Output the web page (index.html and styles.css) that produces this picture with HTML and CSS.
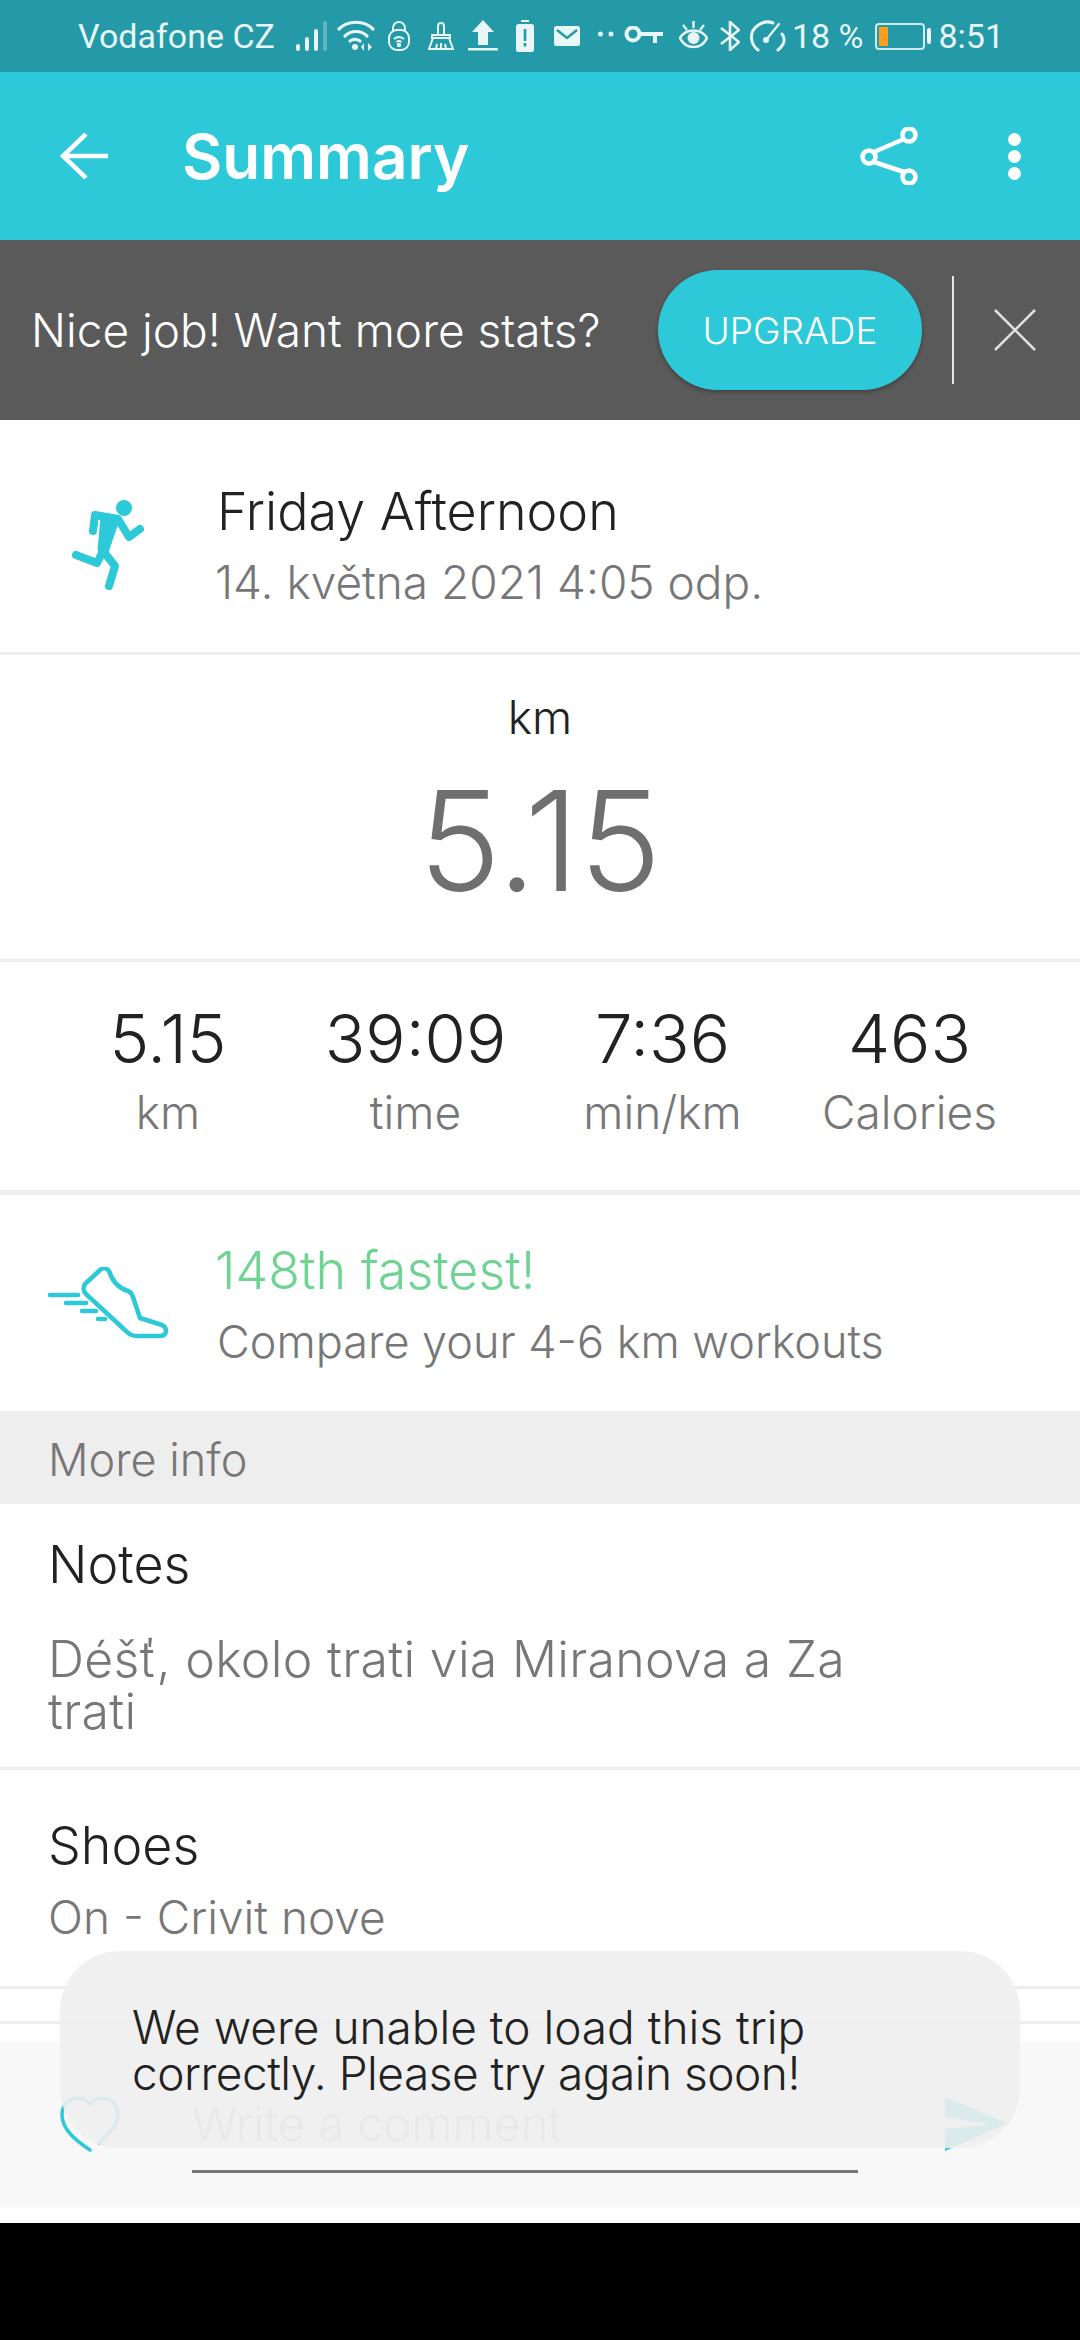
FILE: index.html
```html
<!DOCTYPE html>
<html lang="en">
<head>
    <meta charset="UTF-8">
    <title>Summary</title>
    <link rel="stylesheet" href="styles.css">
</head>
<body>
<div class="phone">
    <div class="status">
        <span class="carrier">Vodafone CZ</span>
        <div class="status-right">
            <svg class="i-signal" width="32" height="32" viewBox="0 0 32 32" fill="#e8f6f8">
                <rect x="0" y="24" width="4" height="7" rx="2"/><rect x="9" y="17" width="4" height="14" rx="2"/><rect x="18" y="9" width="4" height="22" rx="2"/><rect x="27" y="1" width="4" height="30" rx="2" opacity=".3"/>
            </svg>
            <svg class="i-wifi" width="38" height="32" viewBox="0 0 38 32" fill="none" stroke="#e8f6f8" stroke-width="3.2" stroke-linecap="round">
                <path d="M2 9C11 0 27 0 36 9"/><path d="M8 16C14 10 24 10 30 16"/><circle cx="18" cy="27" r="3" fill="#e8f6f8" stroke="none"/>
                <path d="M13 21C16 19 20 19 23 21"/><path d="M27 23l-3 4 3 4zM31 23l4 4-4 4z" fill="#e8f6f8" stroke="none"/>
            </svg>
            <svg class="i-lock" width="22" height="30" viewBox="0 0 22 30" fill="none" stroke="#e8f6f8" stroke-width="2">
                <rect x="1" y="9" width="20" height="20" rx="8"/><path d="M5 10V7a6 6 0 0 1 12 0v3"/><path d="M6 18c3-2.500 7-2.500 10 0M8.500 21c2-1.500 3-1.500 5 0"/><circle cx="11" cy="24" r="1.200" fill="#e8f6f8"/>
            </svg>
            <svg class="i-brush" width="26" height="28" viewBox="0 0 26 28" fill="none" stroke="#e8f6f8" stroke-width="2">
                <path d="M10 12V4a3 3 0 0 1 6 0v8"/><path d="M4 13h18v3H4zM5 16L1 27h24l-4-11M9 22l-1 5M17 22l1 5M13 21v6"/>
            </svg>
            <svg class="i-upload" width="30" height="32" viewBox="0 0 30 32" fill="#e8f6f8">
                <path d="M15 0L26 12H20V25H10V12H4z"/><rect x="0" y="28" width="30" height="2.500"/>
            </svg>
            <svg class="i-alert" width="18" height="32" viewBox="0 0 18 32">
                <rect x="5" y="0" width="8" height="2" fill="#e8f6f8"/><rect x="0" y="4" width="18" height="28" rx="2.500" fill="#e8f6f8"/><rect x="7.700" y="9" width="2.600" height="12" fill="#2499a7"/><rect x="7.700" y="23" width="2.600" height="3.500" fill="#2499a7"/>
            </svg>
            <svg class="i-mail" width="26" height="20" viewBox="0 0 26 20">
                <rect x="0" y="0" width="26" height="20" rx="2.500" fill="#e8f6f8"/><path d="M3 4l10 8 10-8" fill="none" stroke="#2499a7" stroke-width="2.500"/>
            </svg>
            <svg class="i-key" width="65" height="20" viewBox="0 0 65 20" fill="none" stroke="#e8f6f8">
                <circle cx="2.500" cy="8" r="2.500" fill="#e8f6f8" stroke="none"/><circle cx="13" cy="8" r="2.500" fill="#e8f6f8" stroke="none"/>
                <circle cx="35" cy="8" r="6.500" stroke-width="4"/><path d="M42 8H65M57 8v9" stroke-width="4"/>
            </svg>
            <svg class="i-eye" width="29" height="32" viewBox="0 0 29 32" fill="none" stroke="#e8f6f8">
                <path d="M1 18C7 8 22 8 28 18C22 30 7 30 1 18Z" stroke-width="2.600"/><circle cx="14.500" cy="18" r="6" fill="#e8f6f8" stroke="none"/>
                <path d="M14.500 1v7M4 5l4 5M25 5l-4 5" stroke-width="2.400"/>
            </svg>
            <svg class="i-bt" width="20" height="30" viewBox="0 0 20 30" fill="none" stroke="#e8f6f8" stroke-width="2.600">
                <path d="M1 7L19 21L10 29V1L19 9L1 23"/>
            </svg>
            <svg class="i-gauge" width="38" height="32" viewBox="0 0 38 32" fill="none" stroke="#e8f6f8" stroke-width="3" stroke-linecap="round">
                <path d="M9 30C1 24 0 12 8 6C13 2 19 1 24 3"/><path d="M33 14c4 5 2 11-4 16"/><path d="M17 20L30 4" stroke-width="2.200"/><circle cx="17" cy="20" r="3" fill="#e8f6f8" stroke="none"/>
            </svg>
            <span class="pct">18 %</span>
            <div class="battery">
                <div class="battery-box"><div class="battery-fill"></div></div>
                <div class="battery-tip"></div>
            </div>
            <span class="time">8:51</span>
        </div>
    </div>

    <div class="appbar">
        <svg class="back" width="48" height="46" viewBox="0 0 48 46" fill="none" stroke="#fff" stroke-width="4.500">
            <path d="M3 23H48M26 1L3 23L26 45"/>
        </svg>
        <h1 class="title">Summary</h1>
        <svg class="share" width="58" height="58" viewBox="0 0 58 58" fill="none" stroke="#fff" stroke-width="4.500">
            <circle cx="49" cy="8" r="6.500"/><circle cx="9" cy="30" r="6.500"/><circle cx="49" cy="50" r="6.500"/><path d="M14 25L44 12M14 35L44 45"/>
        </svg>
        <div class="dots"><span></span><span></span><span></span></div>
    </div>

    <div class="banner">
        <span class="banner-text">Nice job! Want more stats?</span>
        <button class="upgrade">UPGRADE</button>
        <div class="banner-sep"></div>
        <svg class="close" width="42" height="42" viewBox="0 0 42 42" stroke="#e0e0e0" stroke-width="2.500"><path d="M1 1L41 41M41 1L1 41"/></svg>
    </div>

    <div class="trip">
        <svg class="runner" width="72" height="90" viewBox="0 0 72 90" fill="none" stroke="#2ec9d8" stroke-width="8" stroke-linecap="round" stroke-linejoin="round">
            <circle cx="52" cy="8" r="8" fill="#2ec9d8" stroke="none"/>
            <path d="M21 31L23 15L46 19L57 37L68 29"/>
            <path d="M30 17L46 20L35 52L27 50Z" fill="#2ec9d8" stroke-width="3"/>
            <path d="M31 51L43 66L37 86"/>
            <path d="M31 51L25 63L4 55"/>
        </svg>
        <div class="trip-text">
            <div class="trip-name">Friday Afternoon</div>
            <div class="trip-date">14. května 2021 4:05 odp.</div>
        </div>
    </div>

    <div class="main-stat">
        <div class="main-unit">km</div>
        <div class="main-value">5.15</div>
    </div>

    <div class="stats">
        <div class="stat"><div class="stat-value">5.15</div><div class="stat-label">km</div></div>
        <div class="stat"><div class="stat-value">39:09</div><div class="stat-label">time</div></div>
        <div class="stat"><div class="stat-value">7:36</div><div class="stat-label">min/km</div></div>
        <div class="stat"><div class="stat-value">463</div><div class="stat-label">Calories</div></div>
    </div>

    <div class="compare">
        <svg class="shoe" width="120" height="72" viewBox="0 0 120 72" fill="none" stroke="#2ec9d8" stroke-width="4.500" stroke-linecap="round" stroke-linejoin="round">
            <path d="M37 17L52 3C55 0 59 1 61 4C64 13 69 21 80 24C83 25 84 27 85 30L92 51L114 58C120 61 119 69 112 69H89C85 69 82 68 79 65L38 27C35 24 35 20 37 17Z"/>
            <path d="M2 28H30M18 36H38M34 44H48M50 52H57"/>
        </svg>
        <div class="compare-text">
            <div class="compare-rank">148th fastest!</div>
            <div class="compare-sub">Compare your 4-6 km workouts</div>
        </div>
    </div>

    <div class="section-head">More info</div>

    <div class="info notes">
        <div class="info-title">Notes</div>
        <div class="info-body">Déšť, okolo trati via Miranova a Za<br>trati</div>
    </div>
    <div class="info shoes">
        <div class="info-title">Shoes</div>
        <div class="info-body">On - Crivit nove</div>
    </div>
    <div class="empty-row"></div>

    <div class="comment-bar">
        <svg class="heart" width="60" height="56" viewBox="0 0 60 56" fill="none" stroke="#2ec9d8" stroke-width="3.500" stroke-linecap="round">
            <path d="M30 7C26 2 21 1 17 1C8 1 2 9 2 18C2 32 15 43 30 53"/>
            <path d="M30 7C34 2 39 1 43 1C52 1 58 9 58 18C58 28 48 37 39 46"/>
        </svg>
        <div class="comment-input">Write a comment</div>
        <svg class="send" width="62" height="54" viewBox="0 0 62 54" fill="#2ec9d8"><path d="M0 0L62 26L0 54V32L43 27L0 20Z"/></svg>
    </div>
    <div class="gap"></div>
    <div class="navbar"></div>

    <div class="toast"><span>We were unable to load this trip</span><br><span class="toast-second">correctly. Please try again soon!</span></div>
</div>
</body>
</html>
```

FILE: styles.css
```css
* {
    box-sizing: border-box;
}
body {
    margin: 0;
    background: #000;
    font-family: Inter, "Noto Sans", sans-serif;
    font-weight: 300;
}
.phone {
    position: relative;
    width: 1080px;
    height: 2340px;
    background: #fff;
    overflow: hidden;
    display: flex;
    flex-direction: column;
}
.status {
    height: 72px;
    flex: none;
    background: #2499a7;
    color: #e8f6f8;
    display: flex;
    align-items: center;
    padding: 0 76px 0 78px;
    font-family: Roboto, sans-serif;
    font-weight: 400;
    font-size: 34px;
}
.status-right {
    margin-left: auto;
    display: flex;
    align-items: center;
}
.i-wifi { margin-left: 9px; }
.i-lock { margin-left: 13px; }
.i-brush { margin-left: 18px; }
.i-upload { margin-left: 14px; }
.i-alert { margin-left: 18px; }
.i-mail { margin-left: 20px; }
.i-key { margin-left: 18px; }
.i-eye { margin-left: 16px; }
.i-bt { margin-left: 12px; }
.i-gauge { margin-left: 9px; }
.pct {
    margin-left: 5px;
}
.battery {
    display: flex;
    align-items: center;
    gap: 2px;
    margin-left: 12px;
    margin-right: 7px;
}
.battery-box {
    width: 50px;
    height: 27px;
    border: 2px solid #cfeaee;
    border-radius: 4px;
    padding: 2px;
}
.battery-fill {
    width: 9px;
    height: 100%;
    background: #ff9d1c;
}
.battery-tip {
    width: 4px;
    height: 16px;
    background: #e8f6f8;
    border-radius: 2px;
}
.appbar {
    height: 168px;
    flex: none;
    background: #2ec9d8;
    display: flex;
    align-items: center;
    padding: 0 59px 0 60px;
    color: #fff;
}
.back {
    margin-right: 74px;
}
.title {
    margin: 0;
    font-size: 62px;
    font-weight: 600;
    flex: 1;
}
.dots {
    display: flex;
    flex-direction: column;
    gap: 4px;
    margin-left: 90px;
}
.dots span {
    width: 13px;
    height: 13px;
    border-radius: 50%;
    background: #fff;
}
.banner {
    height: 180px;
    flex: none;
    background: #5a5a5a;
    display: flex;
    align-items: center;
    padding-left: 31px;
    color: #fff;
}
.banner-text {
    font-size: 46px;
    width: 627px;
    white-space: nowrap;
}
.upgrade {
    width: 264px;
    height: 120px;
    border: none;
    border-radius: 60px;
    background: #2ec9d8;
    color: #fff;
    font-family: inherit;
    font-weight: 300;
    font-size: 37px;
    box-shadow: 0 2px 4px rgba(0, 0, 0, 0.3);
}
.banner-sep {
    width: 2px;
    height: 108px;
    background: #e6e6e6;
    margin: 0 40px 0 30px;
}
.trip {
    height: 235px;
    flex: none;
    display: flex;
    align-items: center;
    padding-left: 72px;
    padding-top: 22px;
    border-bottom: 3px solid #eee;
}
.runner {
    margin-top: -4px;
}
.trip-text {
    margin-left: 73px;
}
.trip-name {
    font-size: 52px;
    color: #222;
    line-height: 66px;
    margin-bottom: 4px;
}
.trip-date {
    font-size: 46px;
    color: #777;
    line-height: 66px;
    margin-left: -2px;
}
.main-stat {
    height: 307px;
    flex: none;
    text-align: center;
    border-bottom: 3px solid #eee;
    padding-top: 32px;
}
.main-unit {
    font-size: 46px;
    color: #222;
    line-height: 60px;
}
.main-value {
    font-size: 139px;
    color: #6f6f6f;
    line-height: 170px;
    margin-top: 9px;
}
.stats {
    height: 233px;
    flex: none;
    display: grid;
    grid-template-columns: 248px 247px 247px 247px;
    padding-left: 44px;
    padding-bottom: 10px;
    border-bottom: 5px solid #eee;
    text-align: center;
    align-content: center;
}
.stat-value {
    font-size: 67px;
    color: #222;
    line-height: 78px;
}
.stat-label {
    font-size: 46px;
    color: #777;
    line-height: 60px;
    margin-top: 4px;
}
.compare {
    height: 216px;
    flex: none;
    display: flex;
    align-items: center;
    padding-left: 48px;
    padding-top: 7px;
}
.shoe {
    margin-top: -7px;
}
.compare-text {
    margin-left: 47px;
}
.compare-rank {
    font-size: 52px;
    color: #6fd391;
    line-height: 70px;
}
.compare-sub {
    font-size: 45px;
    color: #777;
    line-height: 70px;
    margin-top: 1px;
    margin-left: 2px;
}
.section-head {
    height: 93px;
    flex: none;
    background: #eee;
    color: #777;
    font-size: 45px;
    line-height: 89px;
    padding: 4px 0 0 48px;
}
.info {
    flex: none;
    padding-left: 48px;
    border-bottom: 3px solid #eee;
}
.notes {
    height: 266px;
    padding-top: 28px;
}
.shoes {
    height: 219px;
    padding-top: 43px;
}
.info-title {
    font-size: 52px;
    color: #222;
    line-height: 66px;
}
.notes .info-title {
    margin-bottom: 35px;
}
.info-body {
    font-size: 50px;
    letter-spacing: 0.3px;
    color: #777;
    line-height: 52px;
}
.shoes .info-body {
    font-size: 46px;
    letter-spacing: 0;
    margin-top: 12px;
}
.empty-row {
    height: 35px;
    flex: none;
    border-bottom: 3px solid #eee;
}
.comment-bar {
    height: 165px;
    flex: none;
    margin-top: 18px;
    background: #f8f8f8;
    position: relative;
    display: flex;
    align-items: flex-start;
    padding: 55px 73px 0 60px;
}
.comment-input {
    width: 666px;
    height: 76px;
    margin-left: 72px;
    border-bottom: 3px solid #757575;
    font-size: 47px;
    color: #bbb;
    line-height: 50px;
    padding-top: 2px;
    white-space: nowrap;
}
.send {
    margin-left: auto;
}
.gap {
    height: 16px;
    flex: none;
}
.navbar {
    flex: 1;
    background: #000;
}
.toast {
    position: absolute;
    left: 60px;
    top: 1951px;
    width: 960px;
    height: 197px;
    border-radius: 60px;
    background: rgba(238, 238, 238, 0.9);
    color: #222;
    font-size: 46px;
    line-height: 46px;
    padding: 53px 0 0 72px;
}
.toast-second {
    letter-spacing: -0.5px;
}
```
